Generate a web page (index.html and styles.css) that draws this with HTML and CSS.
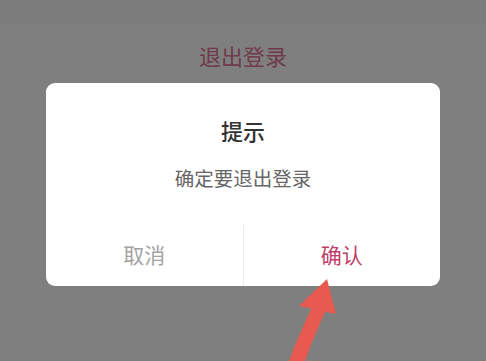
FILE: index.html
```html
<!DOCTYPE html>
<html lang="zh">
<head>
<meta charset="utf-8">
<link rel="stylesheet" href="styles.css">
</head>
<body>
<div class="screen">
  <div class="topband"></div>
  <div class="header">退出登录</div>
  <div class="dialog">
    <div class="title">提示</div>
    <div class="message">确定要退出登录</div>
    <div class="actions">
      <div class="btn cancel">取消</div>
      <div class="btn confirm">确认</div>
    </div>
  </div>
  <svg class="arrow" width="486" height="361" viewBox="0 0 486 361">
    <path d="M289 361 C296 342 305 322 314 303 L328 306 C319 325 311 343 305 361 Z" fill="#e85a4f"/>
    <path d="M327 279 L299 306 L336 314 Z" fill="#e85a4f"/>
  </svg>
</div>
</body>
</html>
```
FILE: styles.css
```css
html, body {
  margin: 0;
  padding: 0;
}
body {
  background: #7f7f7f;
  font-family: "Noto Sans CJK SC", "Noto Sans", sans-serif;
}
.screen {
  position: relative;
  width: 486px;
  height: 361px;
  overflow: hidden;
  background: #7f7f7f;
}
.topband {
  height: 24px;
  background: #7c7c7c;
}
.header {
  text-align: center;
  font-size: 22px;
  line-height: 30px;
  margin-top: 16px;
  color: #6f3a4b;
  height: 43px;
}
.dialog {
  margin: 0 46px;
  height: 203px;
  background: #ffffff;
  border-radius: 9px;
  display: flex;
  flex-direction: column;
  align-items: stretch;
}
.title {
  margin-top: 32px;
  text-align: center;
  font-size: 22px;
  font-weight: 500;
  line-height: 30px;
  color: #333333;
}
.message {
  margin-top: 20px;
  text-align: center;
  font-size: 19.5px;
  line-height: 26px;
  color: #666666;
}
.actions {
  margin-top: auto;
  height: 61px;
  display: flex;
}
.btn {
  flex: 1;
  display: flex;
  align-items: center;
  justify-content: center;
  font-size: 21px;
  padding-bottom: 3px;
}
.cancel {
  color: #a3a3a3;
  border-right: 1px solid #ececec;
}
.confirm {
  color: #c03e69;
}
.arrow {
  position: absolute;
  left: 0;
  top: 0;
}
```
